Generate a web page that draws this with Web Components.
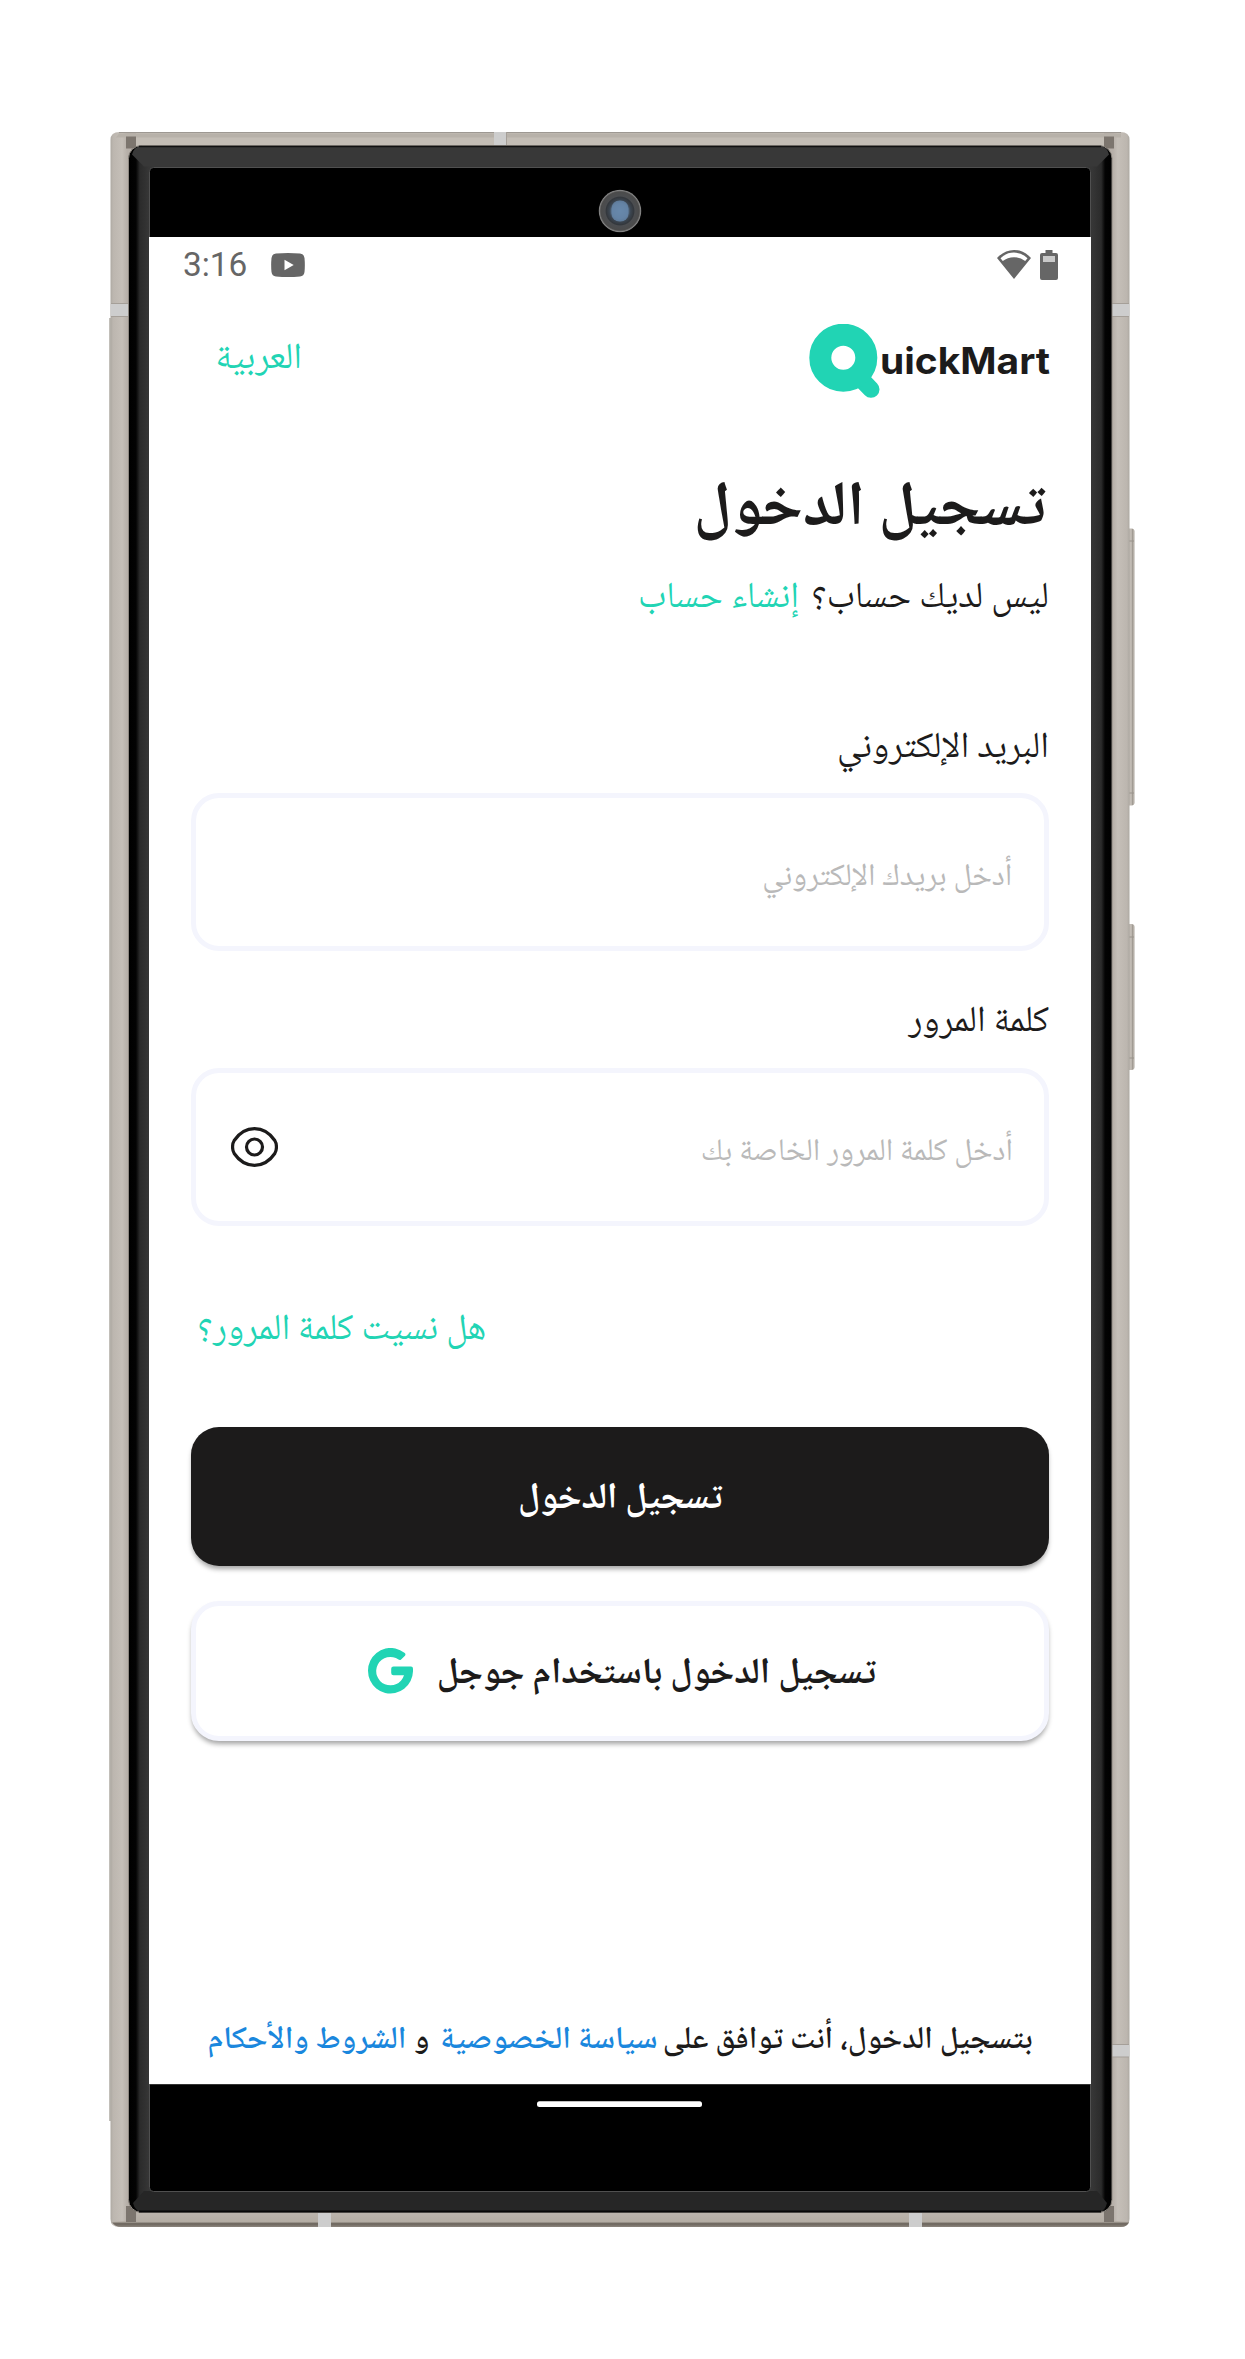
<!DOCTYPE html>
<html lang="ar">
<head>
<meta charset="utf-8">
<title>QuickMart</title>
<style>
html,body{margin:0;padding:0;background:#fff}
body{width:1245px;height:2359px;overflow:hidden;font-family:"Noto Naskh Arabic","Noto Sans Arabic","DejaVu Sans",sans-serif;color:#1c1b1b}
</style>
</head>
<body>
<phone-frame><login-screen></login-screen></phone-frame>
<script>
const define = (name, html, after) => customElements.define(name, class extends HTMLElement {
  connectedCallback() {
    if (this.shadowRoot) return;
    const t = document.createElement('template');
    t.innerHTML = html;
    this.attachShadow({ mode: 'open' }).append(t.content.cloneNode(true));
    if (after) after.call(this, this.shadowRoot);
  }
});

// One line of text on a fixed baseline, scaled to the width w.
define('text-line', `<style>
:host{display:block;flex:none;white-space:nowrap;line-height:1}
i{display:inline-block;width:0}
span{display:inline-block;transform-origin:100% 50%}
:host([dir=ltr]) span{transform-origin:0 50%}
</style><i></i><span><slot></slot></span>`, function (root) {
  const n = k => parseFloat(this.getAttribute(k));
  const up = n('up'), down = n('down'), span = root.querySelector('span');
  this.style.fontSize = n('size') + 'px';
  this.style.width = n('w') + 'px';
  this.style.height = up + down + 'px';
  root.querySelector('i').style.height = up + 'px';
  span.style.transform = 'scaleX(' + n('w') / span.getBoundingClientRect().width + ')';
});

define('phone-frame', `<style>
:host{display:grid;width:1245px;height:2359px}
svg,div{grid-area:1/1}
div{margin:237px 0 0 149px;width:942px;height:1847px;display:flex}
</style>
<svg width="1245" height="2359" viewBox="0 0 1245 2359">
<defs>
<linearGradient id="side" x1="129" x2="1112" gradientUnits="userSpaceOnUse">
<stop offset="0" stop-color="#000"/><stop offset=".007" stop-color="#030303"/><stop offset=".011" stop-color="#2b2b2b"/><stop offset=".02" stop-color="#363636"/>
<stop offset=".98" stop-color="#363636"/><stop offset=".989" stop-color="#2b2b2b"/><stop offset=".993" stop-color="#030303"/><stop offset="1" stop-color="#000"/></linearGradient>
<linearGradient id="metal" x1="110" x2="1130" gradientUnits="userSpaceOnUse">
<stop offset="0" stop-color="#aaa69f"/><stop offset=".003" stop-color="#bcb6af"/><stop offset=".012" stop-color="#c5bfb8"/><stop offset=".017" stop-color="#b6afa8"/>
<stop offset=".983" stop-color="#b6afa8"/><stop offset=".988" stop-color="#c5bfb8"/><stop offset=".997" stop-color="#bcb6af"/><stop offset="1" stop-color="#aaa69f"/></linearGradient>
<linearGradient id="low" x1="0" x2="0" y1="2212" y2="2227" gradientUnits="userSpaceOnUse"><stop offset="0" stop-color="#bcb5ad"/><stop offset=".65" stop-color="#b4ada4"/><stop offset=".78" stop-color="#6a635b"/><stop offset="1" stop-color="#8c857d"/></linearGradient>
<linearGradient id="key" x1="1128" x2="1135" y1="0" y2="0" gradientUnits="userSpaceOnUse"><stop offset="0" stop-color="#b3ada5"/><stop offset=".45" stop-color="#c5bfb8"/><stop offset=".65" stop-color="#a09a92"/><stop offset=".85" stop-color="#c1bbb3"/><stop offset="1" stop-color="#98928a"/></linearGradient>
<radialGradient id="lens"><stop offset="0" stop-color="#6d8db1"/><stop offset=".36" stop-color="#5b7591"/><stop offset=".5" stop-color="#3c4651"/><stop offset=".65" stop-color="#33373c"/><stop offset=".7" stop-color="#4b4d50"/><stop offset=".9" stop-color="#4b4b4b"/><stop offset=".97" stop-color="#858585"/><stop offset="1" stop-color="#5c5c5c"/></radialGradient>
</defs>
<rect x="1126" y="528.5" width="8.5" height="277" rx="3" fill="url(#key)"/><path d="M1129 541h5M1129 793h5" stroke="#98928a"/>
<rect x="1126" y="924" width="8.5" height="146" rx="3" fill="url(#key)"/><path d="M1129 937h5M1129 1058h5" stroke="#98928a"/>
<path d="M110.500 140q0-8 9-8h1001q9 0 9 8v2079q0 8-9 8h-1001q-9 0-9-8z" fill="url(#metal)"/>
<path d="M109.200 318V2121h2V318z" fill="#b3afa8"/>
<path d="M119 132.500h1002" stroke="#9d9892"/><path d="M136 133h968v13h-968z" fill="#c3bdb5"/><path d="M119 133.500h1002v4H116z" fill="#b7b1a9"/>
<path d="M112 2222q3 5 9 5h1000q6 0 8-5l-26-2v-8h-966v8z" fill="url(#low)"/>
<path d="M126 136.500h10v12h-10zM1104 136.500h10v12h-10zM126 2206h10v16h-10zM1104 2206h10v16h-10z" fill="#7c756e"/>
<path d="M494 132h13v14h-13zM110.500 303.500h17.500v13h-17.500zM1112 303.500h17.500v13h-17.500zM1112 2044.500h17.500v12.500h-17.500zM318 2213h13v14h-13zM909 2213h13v14h-13z" fill="#cdcdcd"/>
<path d="M506.500 132v14M111 316.500h17M1112 303.500h17M1112 316.500h17M111 303.500h17M1112 2044.500h17M1112 2057h17" stroke="#a59f98"/>
<rect x="128.500" y="145.500" width="983.500" height="2067" rx="13" fill="url(#side)" stroke="#8d8780"/>
<path d="M141 146.500h960q6 0 8 8l-12 12H144l-12-12q2-8 9-8z" fill="#383838"/><path d="M139 146.500h962" stroke="#111" stroke-width="1.500"/>
<path d="M144 2191h953l10 12q-2 8-7 8H141q-6 0-8-8z" fill="#262626"/><path d="M139 2211.500h962" stroke="#070707" stroke-width="2"/>
<rect x="149.500" y="167.500" width="941" height="2024" rx="4" fill="#000" stroke="#505050"/>
<rect x="149" y="2083.500" width="941" height="1" fill="#666"/>
<rect x="537" y="2101.300" width="165" height="5.700" rx="2.500" fill="#fff"/>
<circle cx="620" cy="211" r="21.300" fill="url(#lens)"/><rect x="611.500" y="200.500" width="17" height="21" rx="8" fill="#6787aa" opacity=".8"/>
</svg><div><slot></slot></div>`);

define('status-bar', `<style>
:host{display:flex;direction:ltr;align-items:center;height:55px;padding:0 33.500px 0 33.600px;color:#666;font-family:Roboto,sans-serif;font-weight:450}
.yt{margin:0 auto 0 23.600px}.bat{margin-left:9px}svg{display:block;flex:none}
</style>
<text-line dir="ltr" size="33" w="64.400" up="32.500" down="10">3:16</text-line>
<svg class="yt" width="34" height="24" viewBox="0 0 34 24"><path fill="#666" fill-rule="evenodd" d="M5 .6Q17-.5 29 .6q4 .2 4.500 4.400.7 7 0 14-.5 4.200-4.500 4.400-12 1.100-24 0Q1 23.200.500 19q-.7-7 0-14Q1 .8 5 .6zM13.500 6.700v10.600l9.200-5.300z"/></svg>
<svg width="34" height="29" viewBox="0 0 34 29"><path fill="#666" fill-rule="evenodd" d="M17 0Q26.500 0 34 8L17 29 0 8Q7.500 0 17 0zm0 2.600Q9.300 2.600 3.500 8.200l2.300 2.900Q10.500 7.200 17 7.200t11.200 3.900l2.300-2.900Q24.700 2.600 17 2.600z"/></svg>
<svg class="bat" width="18" height="30" viewBox="0 0 18 30"><path fill="#666" d="M5.500 0h7v3H16q2 0 2 2v23q0 2-2 2H2q-2 0-2-2V5q0-2 2-2h3.500z"/><path fill="#c9c9c9" d="M3 6h12v6H3z"/></svg>`);

define('brand-logo', `<style>
:host{display:flex;direction:ltr;align-items:flex-start;color:#1c1b1b;font-family:Inter,sans-serif;font-weight:700}
svg{display:block}
</style>
<svg width="71" height="74" viewBox="0 0 71 74"><path d="M53 56l9 9.300" stroke="#21d4b4" stroke-width="17" stroke-linecap="round"/><circle cx="34.300" cy="33.700" r="23" fill="none" stroke="#21d4b4" stroke-width="22"/></svg>
<text-line dir="ltr" size="36.500" w="170" up="50.300" down="12">uickMart</text-line>`);

define('text-box', `<style>
:host{display:flex;align-items:center;box-sizing:border-box;height:158px;border:5px solid #f4f5fd;border-radius:28px;padding:0 31.400px 0 34.700px;color:#b9b9b9;justify-content:space-between}
</style><slot></slot>`);

define('eye-icon', `<style>:host{display:block;height:40px}svg{display:block}</style>
<svg width="47" height="40" viewBox="0 0 47 40" fill="none" stroke="#1c1b1b" stroke-width="3.200"><path d="M23.500 1.700C14 1.700 7.500 7.200 3.200 13.500 1 17 1 23 3.200 26.500 7.500 32.800 14 38.300 23.500 38.300S39.500 32.800 43.800 26.500C46 23 46 17 43.800 13.500 39.500 7.200 33 1.700 23.500 1.700z"/><circle cx="23.500" cy="20" r="8"/></svg>`);

define('google-icon', `<style>:host{display:block;height:46px}svg{display:block}</style>
<svg width="45" height="46" viewBox="0 0 45 46"><path fill="#21d4b4" d="M36.400 4.800q2 1.500.3 3.200l-3.600 3.400q-1.200 1-2.600.1A14.200 14.200 0 1 0 36 27.300H25.500q-2.300 0-2.300-2.300v-4.300q0-2.200 2.300-2.200H43q2 0 2 2.200v2.600A22.500 22.800 0 1 1 36.400 4.800z"/></svg>`);

define('action-button', `<style>
:host{display:flex;align-items:center;justify-content:center;box-sizing:border-box;height:138.500px;border-radius:28px;background:#1c1b1b;color:#fff;font-weight:700;box-shadow:0 4px 5px -1px rgba(0,0,0,.36)}
:host([outlined]){height:140px;background:#fff;color:#1c1b1b;border:5px solid #f4f5fd;gap:24px;padding-left:4px}
</style><slot></slot>`);

define('login-screen', `<style>
:host{display:flex;flex-direction:column;direction:rtl;background:#fff;width:942px;height:1847px}
header{display:flex;justify-content:space-between;align-items:flex-start;height:130px;padding:0 41px 0 66.700px}
brand-logo{margin-top:32px}header>text-line{margin-top:39.700px}
main{display:flex;flex-direction:column;padding:0 42px}
.row{display:flex}.g{color:#21d4b4}.b{color:#1a87dd}
h1{margin:33px 2.900px 0 0;font-weight:700}
.sub{margin:21.700px 0 0 0;gap:12.600px}
.l1{margin-top:96px}.l2{margin-top:39.500px}
.f1{margin-top:22.500px}.f2{margin-top:23px}
.forgot{margin:73.300px 0 0 7px;justify-content:flex-end}
.a1{margin-top:74.200px}.a2{margin-top:35.700px}
footer{display:flex;margin:267px 16.200px 0 0;font-weight:650}
footer .b{margin-right:5px}footer .and{margin-right:11.400px}footer .last{margin-right:6.700px}
</style>
<status-bar></status-bar>
<header><brand-logo></brand-logo><text-line class="g" size="36.500" w="86.400" up="36" down="14">العربية</text-line></header>
<main>
<h1><text-line size="62.500" w="352.400" up="70" down="20">تسجيل الدخول</text-line></h1>
<div class="row sub"><text-line size="36.500" w="237.500" up="40" down="14">ليس لديك حساب؟</text-line><text-line class="g" size="36.500" w="161" up="40" down="14">إنشاء حساب</text-line></div>
<text-line class="l1" size="36.500" w="212" up="40" down="14">البريد الإلكتروني</text-line>
<text-box class="f1"><text-line size="31.300" w="250" up="38" down="12">أدخل بريدك الإلكتروني</text-line></text-box>
<text-line class="l2" size="36.500" w="140.700" up="40" down="14">كلمة المرور</text-line>
<text-box class="f2"><text-line size="31.300" w="312" up="38" down="12">أدخل كلمة المرور الخاصة بك</text-line><eye-icon></eye-icon></text-box>
<div class="row forgot"><text-line class="g" size="36.500" w="288.500" up="40" down="14">هل نسيت كلمة المرور؟</text-line></div>
<action-button class="a1"><text-line size="36.500" w="204.500" up="36" down="13">تسجيل الدخول</text-line></action-button>
<action-button class="a2" outlined><text-line size="36.500" w="439.200" up="36" down="13">تسجيل الدخول باستخدام جوجل</text-line><google-icon></google-icon></action-button>
<footer><text-line size="31.500" w="370" up="40" down="14">بتسجيل الدخول، أنت توافق على</text-line><text-line class="b" size="31.500" w="217.500" up="40" down="14">سياسة الخصوصية</text-line><text-line class="and" size="31.500" w="15.700" up="40" down="14">و</text-line><text-line class="b last" size="31.500" w="199" up="40" down="14">الشروط والأحكام</text-line></footer>
</main>`);
</script>
</body>
</html>
